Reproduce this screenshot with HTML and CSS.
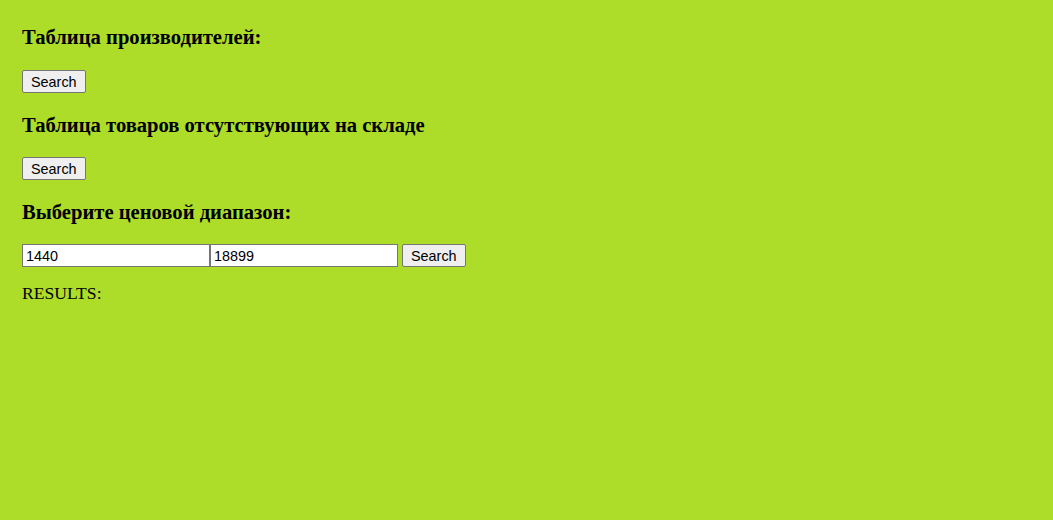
FILE: index.html
```html
<!DOCTYPE html>
<html lang="ru">
<head>
<meta charset="utf-8">
<title>Магазин</title>
<link rel="stylesheet" href="styles.css">
</head>
<body>
<div class="page">
  <h3 class="title">Таблица производителей:</h3>
  <form class="row row-first">
    <button type="button" class="btn">Search</button>
  </form>
  <h3 class="title">Таблица товаров отсутствующих на складе</h3>
  <form class="row">
    <button type="button" class="btn">Search</button>
  </form>
  <h3 class="title">Выберите ценовой диапазон:</h3>
  <form class="row">
    <input class="field" type="text" value="1440"><input class="field" type="text" value="18899">
    <button type="button" class="btn btn-gap">Search</button>
  </form>
  <div class="results">RESULTS:</div>
</div>
</body>
</html>
```

FILE: styles.css
```css
html, body {
  margin: 0;
  padding: 0;
  background: #addd28;
}

.page {
  padding: 25px 22px 0;
  font-family: "Liberation Serif", "Times New Roman", serif;
  color: #000;
}

.title {
  margin: 0;
  font-size: 20.6px;
  line-height: 24px;
  font-weight: bold;
}

.row {
  display: flex;
  align-items: flex-start;
  height: 23px;
  margin: 20px 0;
}

.row-first {
  margin-top: 21px;
}

.btn {
  box-sizing: border-box;
  height: 23px;
  padding: 0 8px;
  font-family: "Liberation Sans", Arial, sans-serif;
  font-size: 14.4px;
  color: #000;
  background: #efefef;
  border: 1px solid #767676;
  border-radius: 2px;
}

.btn-gap {
  margin-left: 4px;
}

.field {
  box-sizing: border-box;
  width: 188px;
  height: 23px;
  margin: 0;
  padding: 1px 3px;
  font-family: "Liberation Sans", Arial, sans-serif;
  font-size: 14.4px;
  color: #000;
  background: #fff;
  border: 1px solid #767676;
  border-radius: 0;
}

.results {
  margin-top: -4px;
  font-size: 17.6px;
  line-height: 20px;
}
```
